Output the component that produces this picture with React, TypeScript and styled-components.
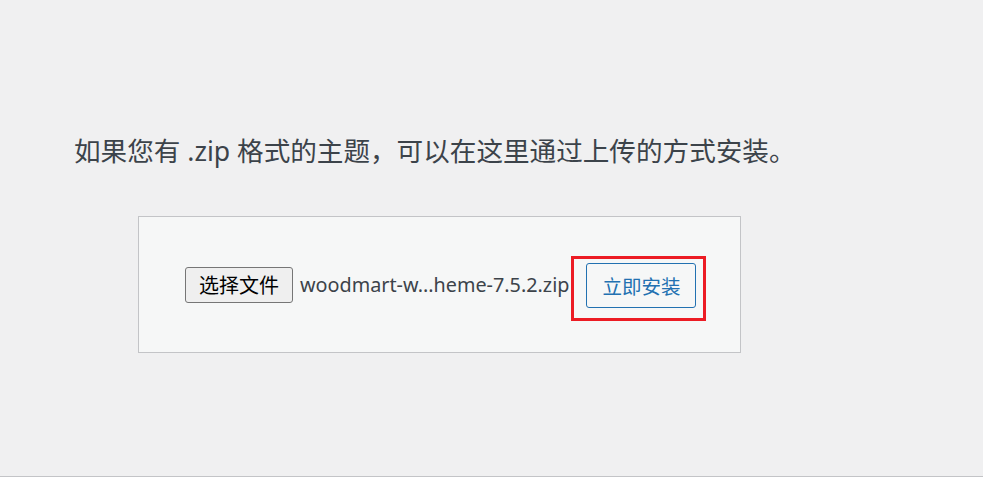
import React from "react";
import styled, { createGlobalStyle } from "styled-components";

const Global = createGlobalStyle`
  html, body { margin: 0; padding: 0; background: #ffffff; }
  body { font-family: "Noto Sans", "Noto Sans CJK SC", sans-serif; }
`;

const Page = styled.div`
  background: #f0f0f1;
  border-bottom: 1px solid #c3c4c7;
  padding: 133px 0 0 74px;
  box-sizing: border-box;
  height: 477px;
`;

const Description = styled.p`
  margin: 0;
  font-family: "Noto Sans", "Noto Sans CJK SC", sans-serif;
  font-size: 26.6px;
  line-height: 36px;
  color: #3c434a;
  white-space: nowrap;
`;

const UploadCard = styled.div`
  margin: 47px 0 0 64px;
  width: 603px;
  height: 137px;
  box-sizing: border-box;
  background: #f6f7f7;
  border: 1px solid #c3c4c7;
  display: flex;
  align-items: center;
  padding-left: 46px;
`;

const FileButton = styled.button`
  width: 108px;
  height: 36px;
  box-sizing: border-box;
  border: 1px solid #767676;
  border-radius: 3px;
  background: #efefef;
  color: #000;
  font-family: "Noto Sans CJK SC", sans-serif;
  font-size: 20px;
  padding: 0;
  display: flex;
  align-items: center;
  justify-content: center;
`;

const FileName = styled.span`
  margin-left: 7px;
  font-family: "Noto Sans", "Noto Sans CJK SC", sans-serif;
  font-size: 19.8px;
  color: #3c434a;
  white-space: nowrap;
`;

const InstallButton = styled.button`
  position: relative;
  margin: 1px 0 0 17px;
  width: 110px;
  height: 45px;
  box-sizing: border-box;
  border: 1px solid #2271b1;
  border-radius: 3px;
  background: #f6f7f7;
  color: #2271b1;
  font-family: "Noto Sans CJK SC", sans-serif;
  font-size: 19.5px;
  padding: 0;
  display: flex;
  align-items: center;
  justify-content: center;

  &::after {
    content: "";
    position: absolute;
    top: -8px;
    left: -16px;
    right: -11px;
    bottom: -14px;
    border: 3px solid #ec1c24;
    pointer-events: none;
  }
`;

export default function App() {
  return (
    <>
      <Global />
      <Page>
        <Description>如果您有 .zip 格式的主题，可以在这里通过上传的方式安装。</Description>
        <UploadCard>
          <FileButton type="button">选择文件</FileButton>
          <FileName>woodmart-w...heme-7.5.2.zip</FileName>
          <InstallButton type="button">立即安装</InstallButton>
        </UploadCard>
      </Page>
    </>
  );
}
